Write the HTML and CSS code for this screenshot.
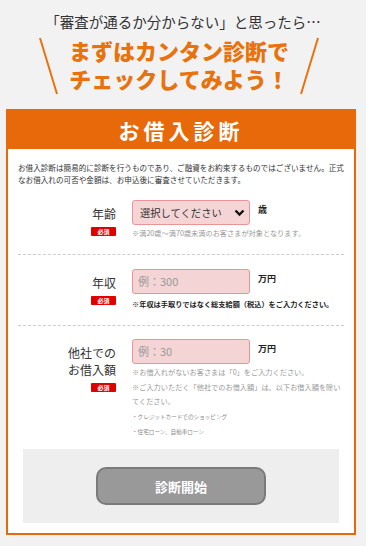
FILE: index.html
```html
<!DOCTYPE html>
<html lang="ja">
<head>
    <meta charset="UTF-8">
    <meta name="viewport" content="width=device-width, initial-scale=1.0">
    <title>お借入診断</title>
    <link rel="stylesheet" href="styles.css">
</head>
<body>

<div class="intro">
    <p class="lead">「審査が通るか分からない」と思ったら…</p>
    <div class="catch">
        <svg class="slash" width="20" height="58" viewBox="0 0 20 58"><line x1="1" y1="1" x2="18" y2="57" stroke="#e8720d" stroke-width="2"/></svg>
        <p class="catch-text"><span>まずはカンタン診断で</span><span>チェックしてみよう！</span></p>
        <svg class="slash" width="20" height="58" viewBox="0 0 20 58"><line x1="19" y1="1" x2="2" y2="57" stroke="#e8720d" stroke-width="2"/></svg>
    </div>
</div>

<div class="card">
    <h1 class="card-title">お借入診断</h1>
    <div class="card-body">
        <p class="notice">お借入診断は簡易的に診断を行うものであり、ご融資をお約束するものではございません。正式なお借入れの可否や金額は、お申込後に審査させていただきます。</p>

        <div class="row">
            <div class="label">
                <span>年齢</span>
                <span class="required">必須</span>
            </div>
            <div class="field">
                <div class="control">
                    <div class="select">
                        <span>選択してください</span>
                        <svg width="11" height="8" viewBox="0 0 11 8"><path d="M1.5 1.5 L5.5 5.5 L9.5 1.5" fill="none" stroke="#111" stroke-width="2.4"/></svg>
                    </div>
                    <span class="unit">歳</span>
                </div>
                <p class="note">※満20歳〜満70歳未満のお客さまが対象となります。</p>
            </div>
        </div>

        <div class="row">
            <div class="label">
                <span>年収</span>
                <span class="required">必須</span>
            </div>
            <div class="field">
                <div class="control">
                    <div class="input">例：300</div>
                    <span class="unit">万円</span>
                </div>
                <p class="note strong">※年収は手取りではなく総支給額（税込）をご入力ください。</p>
            </div>
        </div>

        <div class="row last">
            <div class="label">
                <span>他社での<br>お借入額</span>
                <span class="required">必須</span>
            </div>
            <div class="field">
                <div class="control">
                    <div class="input">例：30</div>
                    <span class="unit">万円</span>
                </div>
                <p class="note long">※お借入れがないお客さまは「0」をご入力ください。</p>
                <p class="note long">※ご入力いただく「他社でのお借入額」は、以下お借入額を除いてください。</p>
                <ul class="sub-list">
                    <li>・クレジットカードでのショッピング</li>
                    <li>・住宅ローン、自動車ローン</li>
                </ul>
            </div>
        </div>

        <div class="submit-area">
            <button class="submit">診断開始</button>
        </div>
    </div>
</div>

</body>
</html>
```

FILE: styles.css
```css
body {
    font-family: "Noto Sans CJK JP", "Noto Sans", sans-serif;
    background-color: #f2f2f2;
    color: #333;
    margin: 0;
    padding: 0;
}

p {
    margin: 0;
}

.intro {
    padding-top: 12px;
    height: 97px;
}

.lead {
    text-align: center;
    font-size: 14.5px;
    line-height: 20px;
    color: #333;
}

.catch {
    display: flex;
    justify-content: center;
    align-items: flex-start;
    gap: 10px;
    margin-top: 4px;
    padding-right: 8px;
}

.slash {
    margin-top: 1px;
}

.catch-text {
    display: flex;
    flex-direction: column;
    gap: 0;
    color: #e8720d;
    font-size: 22px;
    font-weight: 900;
    line-height: 28px;
    text-align: center;
}

.catch-text span {
    display: block;
    height: 28px;
}

.card {
    width: 346px;
    margin-left: 6px;
    border: 2px solid #e8690a;
    background-color: #fff;
}

.card-title {
    margin: 0;
    height: 38px;
    background-color: #e8690a;
    color: #fff;
    font-size: 21px;
    font-weight: 700;
    line-height: 38px;
    letter-spacing: 4px;
    text-align: center;
}

.card-body {
    padding: 13px 10px 10px;
}

.notice {
    font-size: 7.6px;
    line-height: 12px;
    color: #333;
}

.row {
    display: grid;
    grid-template-columns: 98px 1fr;
    column-gap: 16px;
    padding: 14px 0 14px;
    border-bottom: 1px dashed #ccc;
}

.row.last {
    border-bottom: none;
    padding-bottom: 0;
    padding-top: 13px;
}

.label {
    display: flex;
    flex-direction: column;
    align-items: flex-end;
    text-align: right;
    font-size: 12px;
    line-height: 17px;
    color: #333;
    padding-top: 5px;
}

.required {
    margin-top: 5px;
    width: 25px;
    height: 9px;
    background-color: #e00000;
    color: #fff;
    font-size: 6px;
    font-weight: 700;
    line-height: 9px;
    text-align: center;
    border-radius: 1px;
}

.control {
    display: flex;
    align-items: flex-start;
    gap: 8px;
}

.select, .input {
    box-sizing: border-box;
    width: 118px;
    height: 25px;
    background-color: #f4d4d5;
    border: 1px solid #e99596;
    border-radius: 3px;
    font-size: 11px;
    line-height: 23px;
}

.select {
    display: flex;
    justify-content: space-between;
    align-items: center;
    padding: 0 4px 0 7px;
    color: #333;
    font-size: 10.3px;
}

.input {
    padding-left: 5px;
    color: #999;
}

.unit {
    font-size: 9px;
    font-weight: 700;
    color: #222;
    line-height: 20px;
}

.note {
    font-size: 7.2px;
    line-height: 14px;
    color: #999;
    margin-top: 1px;
}

.note.strong {
    color: #222;
    font-weight: 700;
    margin-top: 3px;
}

.sub-list {
    list-style: none;
    margin: 2px 0 0;
    padding: 0;
    font-size: 5.6px;
    line-height: 15px;
    color: #888;
}

.submit-area {
    margin: 9px 5px 0;
    padding: 18px 0;
    background-color: #eee;
    text-align: center;
}

.submit {
    width: 170px;
    height: 38px;
    background-color: #999;
    border: 2px solid #7a7a7a;
    border-radius: 10px;
    color: #fff;
    font-family: inherit;
    font-size: 13px;
    font-weight: 700;
}
```
